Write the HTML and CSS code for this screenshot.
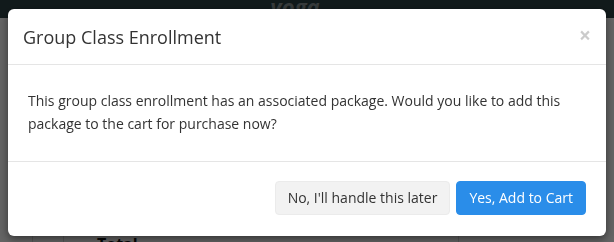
FILE: index.html
```html
<!DOCTYPE html>
<html lang="en">

<head>
    <meta charset="UTF-8">
    <meta name="viewport" content="width=device-width, initial-scale=1.0">
    <title>Group Class Enrollment</title>
    <link rel="stylesheet" href="styles.css">
</head>

<body>
    <div class="page">
        <div class="topbar">
            <span class="logo">yoga</span>
        </div>
        <div class="content">
            <div class="grid">
                <div class="col col-a"></div>
                <div class="col col-b"></div>
                <div class="col col-c"><span class="total">Total</span></div>
                <div class="col col-d"></div>
            </div>
        </div>
    </div>

    <div class="backdrop">
        <div class="modal">
            <div class="modal-header">
                <h4 class="modal-title">Group Class Enrollment</h4>
                <button type="button" class="close">&times;</button>
            </div>
            <div class="modal-body">
                This group class enrollment has an associated package. Would you like to add this package to the cart for purchase now?
            </div>
            <div class="modal-footer">
                <button type="button" class="btn btn-default">No, I'll handle this later</button>
                <button type="button" class="btn btn-primary">Yes, Add to Cart</button>
            </div>
        </div>
    </div>
</body>

</html>
```

FILE: styles.css
```css
* {
    margin: 0;
    padding: 0;
    box-sizing: border-box;
    font-family: "Open Sans", Arial, sans-serif;
}

body {
    width: 614px;
    height: 242px;
    overflow: hidden;
    background: #fff;
}

.page {
    height: 242px;
    display: flex;
    flex-direction: column;
    overflow: hidden;
}

.topbar {
    height: 18px;
    background: #2c4245;
    display: flex;
    justify-content: center;
    overflow: hidden;
}

.logo {
    font-style: italic;
    font-weight: bold;
    font-size: 22px;
    line-height: 12px;
    color: #8a9596;
    margin-right: 24px;
}

.content {
    flex: 1;
    background: #fafafa;
    overflow: hidden;
}

.grid {
    display: flex;
    height: 100%;
    padding-top: 198px;
}

.col {
    border-left: 1px solid #d6d6d6;
}

.col-a {
    width: 32px;
    border-left: none;
}

.col-b {
    width: 31px;
}

.col-c {
    width: 395px;
    padding: 17px 0 0 33px;
}

.col-d {
    flex: 1;
}

.total {
    font-size: 16px;
    font-weight: bold;
    line-height: 20px;
    color: #111;
}

.backdrop {
    position: fixed;
    inset: 0;
    background: rgba(0, 0, 0, 0.6);
    padding: 9px 8px 0;
}

.modal {
    width: 598px;
    background: #fff;
    border-radius: 6px;
    box-shadow: 0 3px 9px rgba(0, 0, 0, 0.5);
}

.modal-header {
    display: flex;
    justify-content: space-between;
    align-items: flex-start;
    padding: 15px 15px 14px;
    border-bottom: 1px solid #e5e5e5;
}

.modal-title {
    font-size: 18px;
    font-weight: normal;
    line-height: 26px;
    color: #333;
}

.close {
    border: none;
    background: none;
    font-size: 21px;
    font-weight: bold;
    line-height: 1;
    color: #000;
    opacity: 0.2;
    margin: 1px 0 0 0;
    cursor: pointer;
}

.modal-body {
    padding: 24px 20px 26px;
    font-size: 14px;
    line-height: 23px;
    color: #333;
}

.modal-footer {
    display: flex;
    justify-content: flex-end;
    gap: 6px;
    padding: 19px 20px 21px;
    border-top: 1px solid #e5e5e5;
}

.btn {
    padding: 6px 12px;
    font-size: 14px;
    line-height: 20px;
    border-radius: 4px;
    border: 1px solid transparent;
    cursor: pointer;
}

.btn-default {
    background: #f2f2f2;
    border-color: #ebebeb;
    color: #333;
}

.btn-primary {
    background: #2a8de9;
    border-color: #2a8de9;
    color: #fff;
}
```
